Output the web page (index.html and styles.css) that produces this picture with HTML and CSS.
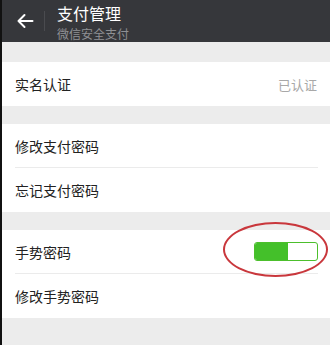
FILE: index.html
```html
<!DOCTYPE html>
<html lang="zh">
<head>
<meta charset="utf-8">
<link rel="stylesheet" href="styles.css">
</head>
<body>
<div class="page">
  <header class="bar">
    <svg class="back" width="18" height="16" viewBox="0 0 18 16"><path d="M16.5 8H2.5M8.5 2L2.5 8L8.5 14" fill="none" stroke="#fff" stroke-width="2" stroke-linecap="round" stroke-linejoin="round"/></svg>
    <span class="divider"></span>
    <div class="titles">
      <div class="title">支付管理</div>
      <div class="subtitle">微信安全支付</div>
    </div>
  </header>
  <section class="group first">
    <div class="row"><span class="label">实名认证</span><span class="value">已认证</span></div>
  </section>
  <section class="group">
    <div class="row line"><span class="label">修改支付密码</span></div>
    <div class="row"><span class="label">忘记支付密码</span></div>
  </section>
  <section class="group">
    <div class="row line switch-row">
      <span class="label">手势密码</span>
      <span class="toggle"><span class="on"></span></span>
      <span class="circle"></span>
    </div>
    <div class="row"><span class="label">修改手势密码</span></div>
  </section>
</div>
</body>
</html>
```
FILE: styles.css
```css
html, body { margin: 0; padding: 0; }
body { background: #ececec; font-family: "Noto Sans CJK SC", "Noto Sans", sans-serif; }
.page { width: 328px; height: 345px; border-left: 2px solid #111; background: #ececec; overflow: hidden; }
.bar { height: 42px; background: #36373b; display: flex; align-items: center; }
.back { margin-left: 14px; flex: none; }
.divider { width: 1px; height: 20px; background: #4a4b4f; margin-left: 10px; margin-right: 12px; }
.titles { display: flex; flex-direction: column; align-self: flex-start; padding-top: 4px; }
.title { color: #fff; font-size: 16px; line-height: 19px; }
.subtitle { color: #8f9094; font-size: 12px; line-height: 14px; margin-top: 4px; }
.group { background: #fff; margin-top: 18px; }
.group.first { margin-top: 20px; }
.row { height: 44px; display: flex; align-items: center; justify-content: space-between; margin: 0 12px 0 13px; box-sizing: border-box; position: relative; }
.row.line { border-bottom: 1px solid #ebebeb; }
.label { font-size: 14px; color: #222; }
.value { font-size: 13px; color: #a8a8a8; margin-right: 1px; }
.toggle { width: 62px; height: 17px; border: 1px solid #4cbf2c; border-radius: 3px; background: #fff; display: flex; overflow: hidden; }
.toggle .on { width: 33px; background: #44c02a; }
.circle { position: absolute; left: 208px; top: -8px; width: 101px; height: 51px; border: 2px solid #c9373c; border-radius: 50%; }
```
